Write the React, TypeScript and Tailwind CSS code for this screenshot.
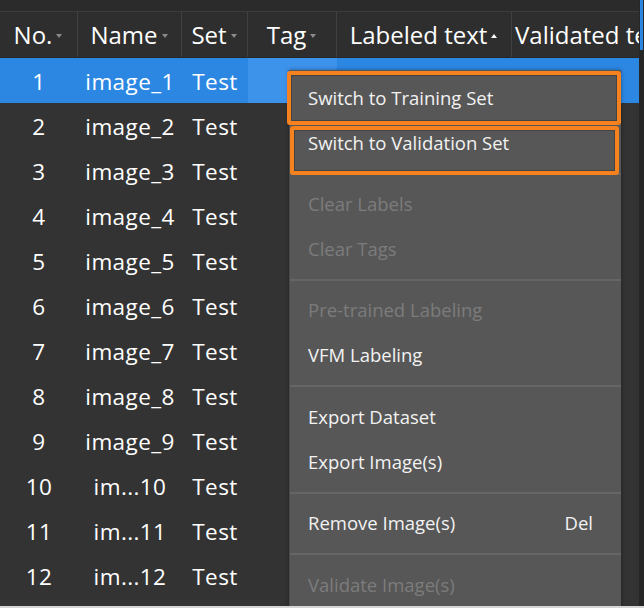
import React from "react";

const cols = [78, 104, 66, 89, 175];

function Arrow({ up, white }: { up?: boolean; white?: boolean }) {
  return (
    <svg width="8" height="6" viewBox="0 0 8 6" className="ml-[3px] mt-[2px] shrink-0">
      {up ? (
        <polygon points="4,1 7,5 1,5" fill={white ? "#ffffff" : "#8a8a8a"} />
      ) : (
        <polygon points="1,1 7,1 4,5" fill={white ? "#ffffff" : "#8a8a8a"} />
      )}
    </svg>
  );
}

type Item =
  | { sep: true; h: string }
  | { sep?: false; label: string; disabled?: boolean; shortcut?: string; box?: "a" | "b" };

const menu: Item[] = [
  { label: "Switch to Training Set", box: "a" },
  { label: "Switch to Validation Set", box: "b" },
  { sep: true, h: "h-[16px]" },
  { label: "Clear Labels", disabled: true },
  { label: "Clear Tags", disabled: true },
  { sep: true, h: "h-[16px]" },
  { label: "Pre-trained Labeling", disabled: true },
  { label: "VFM Labeling" },
  { sep: true, h: "h-[17px]" },
  { label: "Export Dataset" },
  { label: "Export Image(s)" },
  { sep: true, h: "h-[16px]" },
  { label: "Remove Image(s)", shortcut: "Del" },
  { sep: true, h: "h-[17px]" },
  { label: "Validate Image(s)", disabled: true },
];

export default function App() {
  const rows = Array.from({ length: 12 }, (_, i) => i + 1);
  return (
    <div
      className="w-[644px] h-[608px] bg-[#d6d6d6] flex flex-col overflow-hidden"
      style={{ fontFamily: "'Open Sans', 'Noto Sans', sans-serif" }}
    >
      <div className="relative h-[606px] flex overflow-hidden bg-[#333333]">
        <div className="w-[639px] flex flex-col">
          <div className="h-[12px] bg-[#2b2b2b] border-b border-[#3c3c3c]" />
          <div className="h-[46px] flex bg-[#2e2e2e] border-b border-[#262626] text-[24px] text-white">
            {["No.", "Name", "Set", "Tag", "Labeled text"].map((h, i) => (
              <div
                key={h}
                style={{ width: cols[i] }}
                className="flex items-center justify-center border-r border-[#414141] shrink-0 whitespace-nowrap"
              >
                <span className="leading-none">{h}</span>
                {h === "Labeled text" ? <Arrow up white /> : <Arrow />}
              </div>
            ))}
            <div className="flex-1 flex items-center pl-[3px] whitespace-nowrap overflow-hidden">
              <span className="leading-none">Validated te</span>
            </div>
          </div>
          {rows.map((n) => (
            <div
              key={n}
              className={`h-[45px] flex text-[22.5px] tracking-[0.4px] text-white shrink-0 pt-[2px] ${
                n === 1 ? "bg-[#2c87e3]" : ""
              }`}
            >
              <div style={{ width: cols[0] }} className="flex items-center justify-center shrink-0">
                {n}
              </div>
              <div style={{ width: cols[1] }} className="flex items-center justify-center shrink-0">
                {n < 10 ? `image_${n}` : `im...${n}`}
              </div>
              <div style={{ width: cols[2] }} className="flex items-center justify-center shrink-0">
                Test
              </div>
              <div
                style={{ width: cols[3] }}
                className={`shrink-0 -mt-[2px] ${n === 1 ? "bg-[#3d92ea]" : ""}`}
              />
              <div className="flex-1" />
            </div>
          ))}
        </div>
        <div className="w-[5px] bg-[#262626] flex flex-col">
          <div className="h-[50px] mx-[1px] bg-[#2a86e0]" />
        </div>

        <div className="absolute left-[289px] top-[70px] w-[332px] h-[560px] bg-[#575757] border-l border-[#4c4c4c] pt-[6px] shadow-[0_0_4px_rgba(0,0,0,0.4)]">
          {menu.map((it, i) =>
            it.sep ? (
              <div key={i} className={`${it.h} pt-[7px]`}>
                <div className="h-[2px] bg-[#666666]" />
              </div>
            ) : (
              <div
                key={i}
                className={`relative h-[45px] flex items-center pl-[18px] pr-[28px] text-[18.5px] ${
                  it.disabled ? "text-[#7c7c7c]" : "text-[#f2f2f2]"
                }`}
              >
                <span className="flex-1 leading-none">{it.label}</span>
                {it.shortcut && <span className="leading-none">{it.shortcut}</span>}
                {it.box === "a" && (
                  <span className="absolute left-[-3px] right-[0px] top-[-5px] bottom-[-4px] border-[4px] border-[#f5821f] rounded-[3px] shadow-[inset_0_0_0_1px_#444]" />
                )}
                {it.box === "b" && (
                  <span className="absolute left-[0px] right-[2px] top-[5px] bottom-[-9px] border-[4px] border-[#f5821f] rounded-[3px] shadow-[inset_0_0_0_1px_#444]" />
                )}
              </div>
            )
          )}
        </div>
      </div>
    </div>
  );
}
